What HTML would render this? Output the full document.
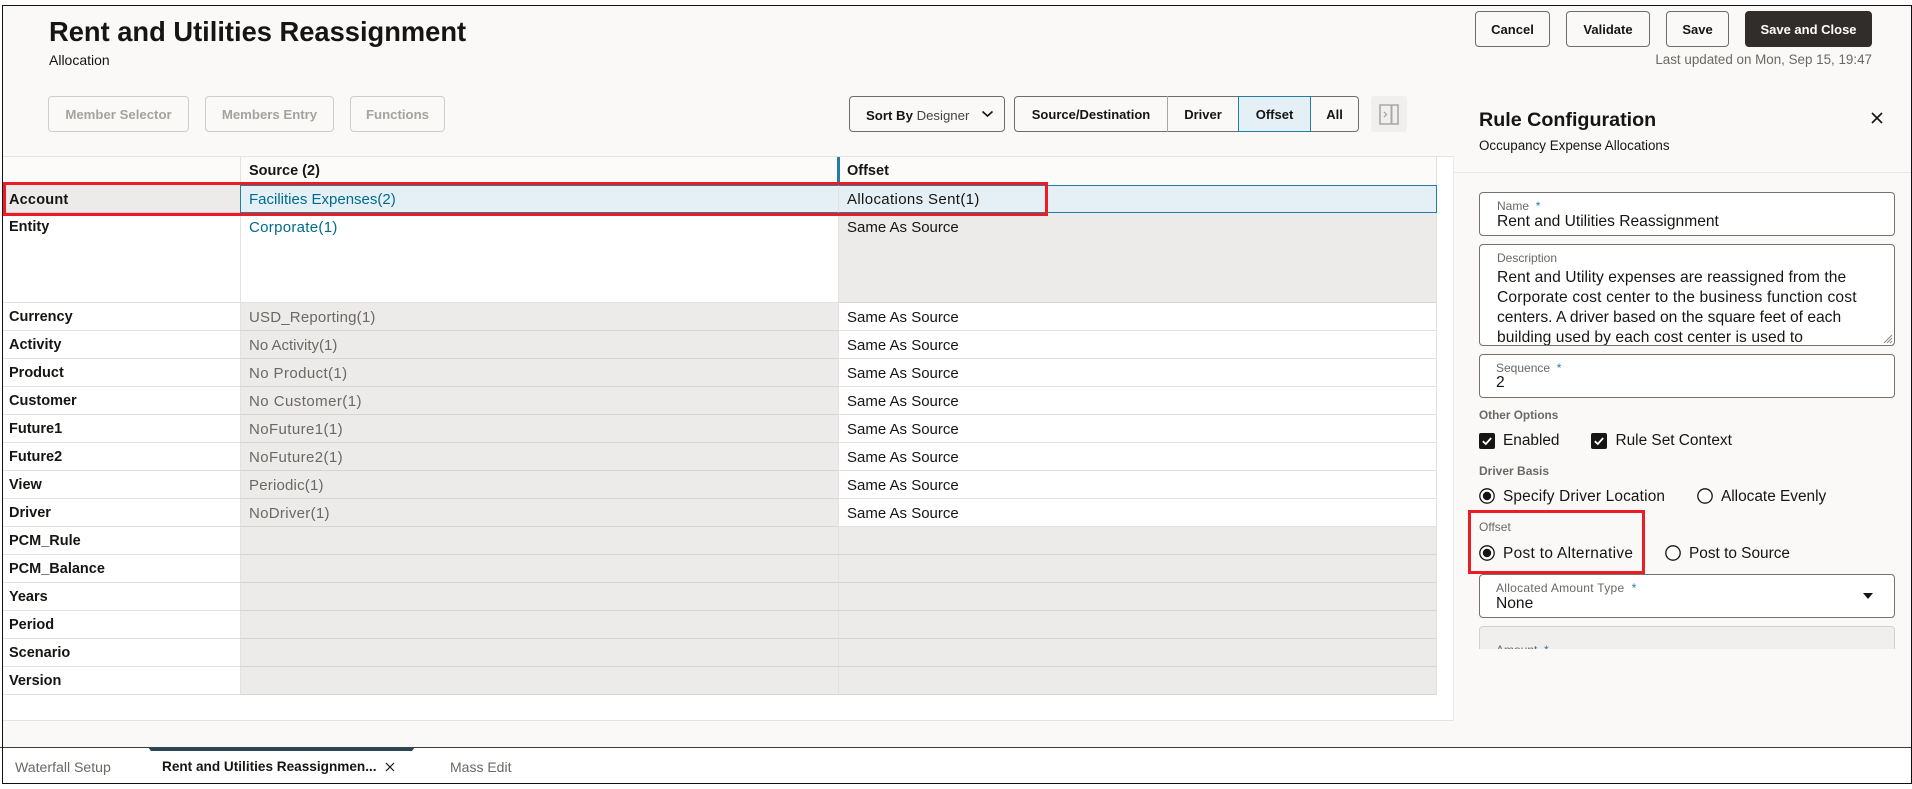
<!DOCTYPE html>
<html lang="en">
<head>
<meta charset="utf-8">
<title>Rent and Utilities Reassignment</title>
<style>
html,body{margin:0;padding:0;width:1912px;height:789px;overflow:hidden;background:#fff;font-family:"Liberation Sans",sans-serif;color:#161513}
*{box-sizing:border-box}
.a{position:absolute}
.t{position:absolute;white-space:nowrap;line-height:20px}
.btn{position:absolute;height:36px;border:1px solid #6f6c69;border-radius:4px;background:#fff0;font-size:13px;font-weight:bold;text-align:center;line-height:35px;color:#161513;white-space:nowrap}
.dis{border-color:#cfcdcb;color:#a5a3a0;top:96px;line-height:36px}
.seg{position:absolute;top:96px;height:36px;font-size:13px;font-weight:bold;text-align:center;line-height:37px;white-space:nowrap}
table{position:absolute;left:3px;top:157px;width:1434px;border-collapse:separate;border-spacing:0;table-layout:fixed;font-size:15px}
td,th{padding:1px 0 0 7px;height:28px;border-bottom:1px solid #e4e3e2;vertical-align:middle;white-space:nowrap;text-align:left;overflow:hidden}
td:first-child{padding-left:6px;font-weight:bold;font-size:14.5px}
td+td,th+th{padding-left:8px;border-left:1px solid #e2e1e0}
th{font-size:14.5px;font-weight:bold;background:#fcfbfa;border-bottom:0;padding-top:0}
td:last-child,th:last-child{border-right:1px solid #e2e1e0}
.g{background:#ecebe9;border-bottom-color:#d6d5d3}
.m{color:#6b6865}
.l{color:#006b8f}
.f{position:absolute;left:1479px;width:416px;background:#fff;border:1px solid #74716e;border-radius:4px}
.lab{font-size:12px;color:#6b6865}
.req{color:#1f7f9e}
.val{font-size:15.6px;color:#161513}
.sec{font-size:12px;font-weight:bold;color:#6b6865;left:1479px}
.opt{font-size:15.4px}
</style>
</head>
<body>
<!-- background surfaces -->
<div class="a" style="left:3px;top:6px;width:1908px;height:741px;background:#faf9f7"></div>
<div class="a" style="left:3px;top:156px;width:1451px;height:565px;background:#fff;border-top:1px solid #e6e4e2;border-bottom:1px solid #e6e4e2;border-right:1px solid #eeecea"></div>
<div class="a" style="left:1454px;top:172px;width:457px;height:1px;background:#ebe9e7"></div>

<!-- header -->
<div class="t" style="left:49px;top:16px;font-size:27.3px;font-weight:bold;line-height:32px">Rent and Utilities Reassignment</div>
<div class="t" style="left:49px;top:50px;font-size:14px">Allocation</div>

<div class="btn" style="left:1475px;top:11px;width:75px">Cancel</div>
<div class="btn" style="left:1566px;top:11px;width:84px">Validate</div>
<div class="btn" style="left:1666px;top:11px;width:63px">Save</div>
<div class="btn" style="left:1745px;top:11px;width:127px;background:#312d2a;border-color:#312d2a;color:#fff">Save and Close</div>
<div class="t" style="right:40px;top:50px;font-size:13.4px;color:#6b6865">Last updated on Mon, Sep 15, 19:47</div>

<!-- toolbar -->
<div class="btn dis" style="left:48px;width:141px;font-size:13.2px">Member Selector</div>
<div class="btn dis" style="left:205px;width:129px;font-size:13.2px">Members Entry</div>
<div class="btn dis" style="left:350px;width:95px;font-size:13.2px">Functions</div>

<div class="btn" style="left:849px;top:96px;width:156px"></div>
<div class="t" style="left:866px;top:105.5px;font-size:13.2px"><b>Sort By</b> <span style="color:#444">Designer</span></div>
<svg class="a" style="left:981px;top:110px" width="13" height="8" viewBox="0 0 13 8"><path d="M1.5 1.5 6.5 6 11.5 1.5" fill="none" stroke="#161513" stroke-width="1.6"/></svg>

<div class="a" style="left:1014px;top:96px;width:345px;height:36px;border:1px solid #6f6c69;border-radius:4px"></div>
<div class="seg" style="left:1014px;width:154px">Source/Destination</div>
<div class="a" style="left:1167px;top:96px;width:1px;height:36px;background:#a9a7a4"></div>
<div class="seg" style="left:1168px;width:70px">Driver</div>
<div class="seg" style="left:1238px;width:73px;background:#e4f0f6;border:1px solid #1f7f9e;line-height:35px">Offset</div>
<div class="seg" style="left:1311px;width:47px">All</div>
<div class="a" style="left:1371px;top:96px;width:36px;height:36px;background:#f1efed;border-radius:3px"></div>
<svg class="a" style="left:1379px;top:104px" width="20" height="21" viewBox="0 0 20 21"><path d="M1 1H19V20H1Z" fill="none" stroke="#aaa8a5" stroke-width="1.6"/><path d="M12.5 1V20" stroke="#aaa8a5" stroke-width="2"/><path d="M5 8l2.5 2.5L5 13" fill="none" stroke="#aaa8a5" stroke-width="1.3"/></svg>

<!-- table -->
<table>
<colgroup><col style="width:237px"><col style="width:598px"><col style="width:599px"></colgroup>
<tr><th></th><th>Source (2)</th><th style="border-left:0;padding-left:9px">Offset</th></tr>
<tr>
<td class="g" style="height:28px;padding-top:2px;letter-spacing:.2px">Account</td>
<td class="l" style="background:#e4f0f6;border-top:1px solid #1f7f9e;border-bottom:1px solid #1f7f9e;border-left:1px solid #1f7f9e;padding-top:0">Facilities Expenses(2)</td>
<td style="background:#e4f0f6;border-top:1px solid #1f7f9e;border-bottom:1px solid #1f7f9e;border-right:1px solid #1f7f9e;letter-spacing:.36px;padding-top:0">Allocations Sent(1)</td>
</tr>
<tr>
<td style="height:90px;vertical-align:top;padding-top:6px">Entity</td>
<td class="l" style="height:90px;vertical-align:top;padding-top:6px;letter-spacing:.3px">Corporate(1)</td>
<td class="g" style="height:90px;vertical-align:top;padding-top:6px">Same As Source</td>
</tr>
<tr><td>Currency</td><td class="g m" style="letter-spacing:.2px">USD_Reporting(1)</td><td>Same As Source</td></tr>
<tr><td>Activity</td><td class="g m">No Activity(1)</td><td>Same As Source</td></tr>
<tr><td>Product</td><td class="g m" style="letter-spacing:.4px">No Product(1)</td><td>Same As Source</td></tr>
<tr><td>Customer</td><td class="g m" style="letter-spacing:.45px">No Customer(1)</td><td>Same As Source</td></tr>
<tr><td>Future1</td><td class="g m" style="letter-spacing:.4px">NoFuture1(1)</td><td>Same As Source</td></tr>
<tr><td>Future2</td><td class="g m" style="letter-spacing:.4px">NoFuture2(1)</td><td>Same As Source</td></tr>
<tr><td>View</td><td class="g m" style="letter-spacing:.2px">Periodic(1)</td><td>Same As Source</td></tr>
<tr><td>Driver</td><td class="g m" style="letter-spacing:.3px">NoDriver(1)</td><td>Same As Source</td></tr>
<tr><td>PCM_Rule</td><td class="g"></td><td class="g"></td></tr>
<tr><td>PCM_Balance</td><td class="g"></td><td class="g"></td></tr>
<tr><td>Years</td><td class="g"></td><td class="g"></td></tr>
<tr><td>Period</td><td class="g"></td><td class="g"></td></tr>
<tr><td>Scenario</td><td class="g"></td><td class="g"></td></tr>
<tr><td>Version</td><td class="g"></td><td class="g"></td></tr>
</table>
<div class="a" style="left:837px;top:157px;width:3px;height:28px;background:#1f7f9e"></div>
<div class="a" style="left:3px;top:182px;width:1045px;height:34px;border:3px solid #ed1c24"></div>

<!-- right panel -->
<div class="t" style="left:1479px;top:108px;font-size:19.7px;font-weight:bold;line-height:24px">Rule Configuration</div>
<svg class="a" style="left:1871px;top:112px" width="12" height="12" viewBox="0 0 12 12"><path d="M1 1 11 11M11 1 1 11" stroke="#161513" stroke-width="1.6"/></svg>
<div class="t" style="left:1479px;top:136px;font-size:13.4px">Occupancy Expense Allocations</div>

<div class="f" style="top:192px;height:44px"></div>
<div class="t lab" style="left:1497px;top:196px">Name &nbsp;<span class="req">*</span></div>
<div class="t val" style="left:1497px;top:212px">Rent and Utilities Reassignment</div>

<div class="f" style="top:244px;height:102px;overflow:hidden">
<div class="t lab" style="left:17px;top:3px">Description</div>
<div class="val" style="position:absolute;left:17px;top:23px;width:385px;line-height:20px;white-space:nowrap"><span style="letter-spacing:.07px">Rent and Utility expenses are reassigned from the</span><br><span style="letter-spacing:.17px">Corporate cost center to the business function cost</span><br><span>centers. A driver based on the square feet of each</span><br><span style="letter-spacing:.08px">building used by each cost center is used to</span></div>
<svg class="a" style="right:1px;bottom:1px" width="10" height="10" viewBox="0 0 10 10"><path d="M1 9 9 1M4 9 9 4M7 9 9 7" stroke="#8b8987" stroke-width="1"/></svg>
</div>

<div class="f" style="top:354px;height:44px"></div>
<div class="t lab" style="left:1496px;top:358px">Sequence &nbsp;<span class="req">*</span></div>
<div class="t val" style="left:1496px;top:373px">2</div>

<div class="t sec" style="top:405px;font-size:11.8px">Other Options</div>
<svg class="a" style="left:1479px;top:433px" width="16" height="16" viewBox="0 0 16 16"><rect width="16" height="16" rx="2" fill="#161513"/><path d="M3.8 8.2 6.8 11 12.2 5" fill="none" stroke="#fff" stroke-width="1.8"/></svg>
<div class="t opt" style="left:1503px;top:431px">Enabled</div>
<svg class="a" style="left:1591px;top:433px" width="16" height="16" viewBox="0 0 16 16"><rect width="16" height="16" rx="2" fill="#161513"/><path d="M3.8 8.2 6.8 11 12.2 5" fill="none" stroke="#fff" stroke-width="1.8"/></svg>
<div class="t opt" style="left:1615.5px;top:431px">Rule Set Context</div>

<div class="t sec" style="top:461px">Driver Basis</div>
<svg class="a" style="left:1479px;top:488px" width="16" height="16" viewBox="0 0 16 16"><circle cx="8" cy="8" r="7.2" fill="#fff" stroke="#161513" stroke-width="1.3"/><circle cx="8" cy="8" r="4.2" fill="#161513"/></svg>
<div class="t opt" style="left:1503px;top:487px;letter-spacing:.17px">Specify Driver Location</div>
<svg class="a" style="left:1697px;top:488px" width="16" height="16" viewBox="0 0 16 16"><circle cx="8" cy="8" r="7.2" fill="#fff" stroke="#161513" stroke-width="1.3"/></svg>
<div class="t opt" style="left:1721px;top:487px">Allocate Evenly</div>

<div class="t sec" style="top:517px;font-weight:normal">Offset</div>
<svg class="a" style="left:1479px;top:545px" width="16" height="16" viewBox="0 0 16 16"><circle cx="8" cy="8" r="7.2" fill="#fff" stroke="#161513" stroke-width="1.3"/><circle cx="8" cy="8" r="4.2" fill="#161513"/></svg>
<div class="t opt" style="left:1503px;top:544px;letter-spacing:.33px">Post to Alternative</div>
<svg class="a" style="left:1664.5px;top:545px" width="16" height="16" viewBox="0 0 16 16"><circle cx="8" cy="8" r="7.2" fill="#fff" stroke="#161513" stroke-width="1.3"/></svg>
<div class="t opt" style="left:1689px;top:544px">Post to Source</div>
<div class="a" style="left:1468px;top:510px;width:177px;height:64px;border:3px solid #ed1c24"></div>

<div class="f" style="top:574px;height:44px"></div>
<div class="t lab" style="left:1496px;top:578px;letter-spacing:.28px">Allocated Amount Type &nbsp;<span class="req">*</span></div>
<div class="t val" style="left:1496px;top:594px">None</div>
<svg class="a" style="left:1863px;top:593px" width="10" height="6" viewBox="0 0 10 6"><path d="M0 0H10L5 6Z" fill="#161513"/></svg>

<div class="a" style="left:1479px;top:626px;width:416px;height:23px;overflow:hidden">
<div class="a" style="left:0;top:0;width:416px;height:44px;background:#f1efed;border:1px solid #d3d1cf;border-radius:4px"></div>
<div class="t lab" style="left:17px;top:14px">Amount &nbsp;<span class="req">*</span></div>
</div>

<!-- tab bar -->
<div class="a" style="left:0;top:747px;width:1912px;height:1px;background:#3b3b3b"></div>
<svg class="a" style="left:148px;top:747px" width="267" height="4" viewBox="0 0 267 4"><path d="M0 0H267L264 4H3Z" fill="#2a4750"/></svg>
<div class="t" style="left:15px;top:757px;font-size:14.1px;color:#6b6865">Waterfall Setup</div>
<div class="t" style="left:162px;top:757px;font-size:13.6px;font-weight:bold">Rent and Utilities Reassignmen...</div>
<svg class="a" style="left:385px;top:762px" width="10" height="10" viewBox="0 0 10 10"><path d="M1 1 9 9M9 1 1 9" stroke="#161513" stroke-width="1.2"/></svg>
<div class="t" style="left:450px;top:757px;font-size:14px;color:#6b6865">Mass Edit</div>

<!-- outer frame -->
<div class="a" style="left:2px;top:5px;width:1910px;height:779px;border:1px solid #111;border-left-width:1.5px;pointer-events:none"></div>
</body>
</html>
